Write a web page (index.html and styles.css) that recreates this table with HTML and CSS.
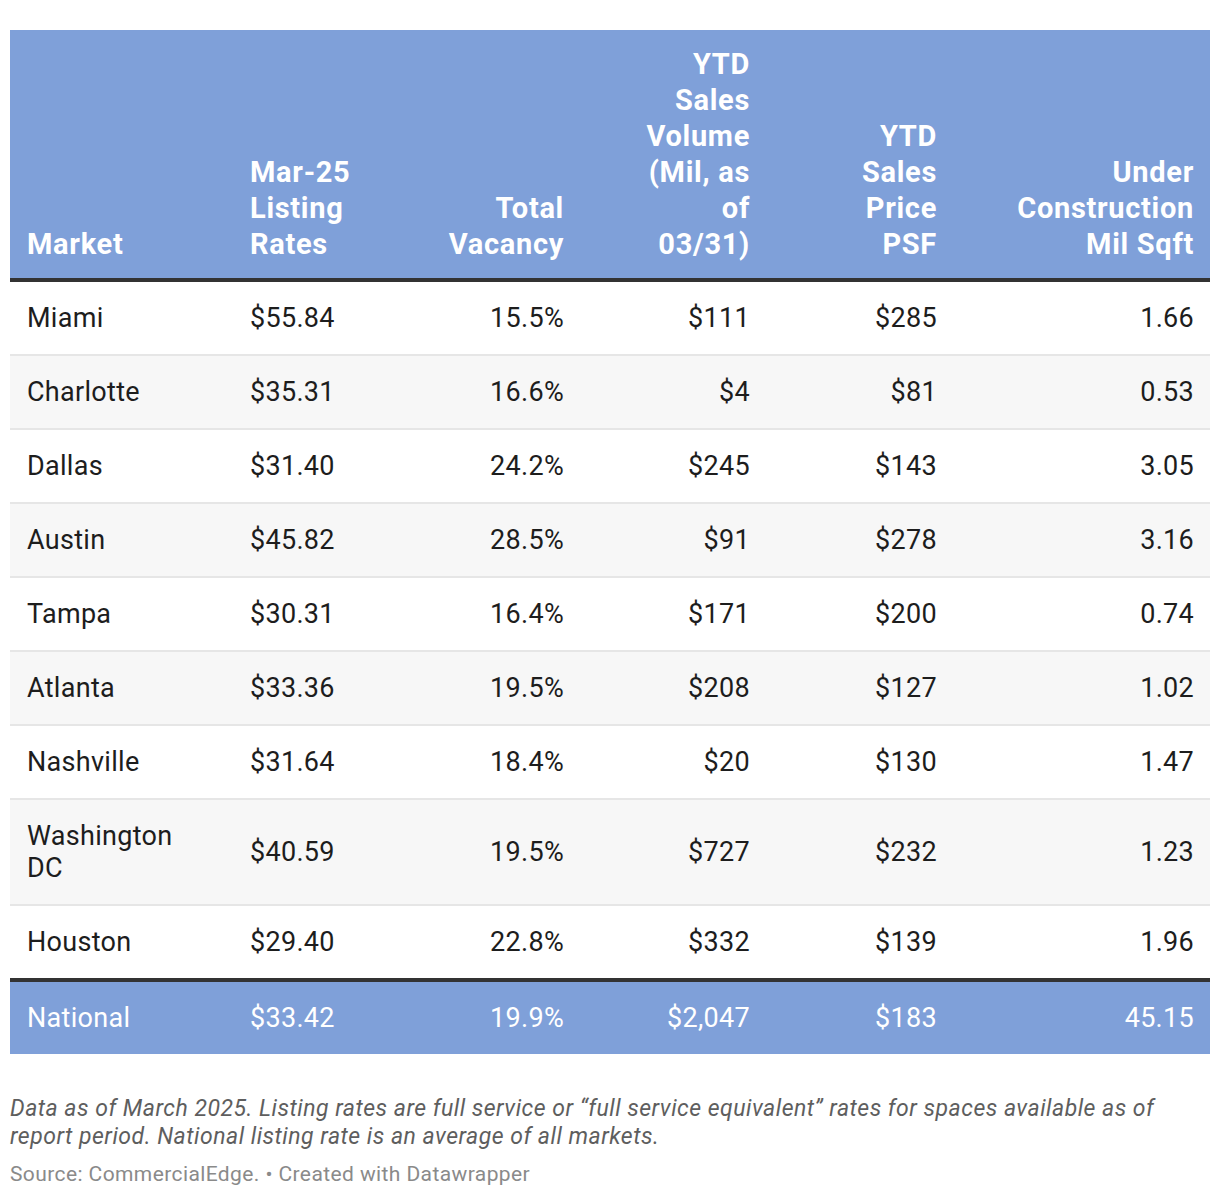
FILE: index.html
```html
<!DOCTYPE html>
<html lang="en">
<head>
<meta charset="utf-8">
<title>Office Market Table</title>
<link rel="stylesheet" href="styles.css">
</head>
<body>
<div class="chart">
  <table class="data">
    <colgroup>
      <col class="c-market">
      <col class="c-rate">
      <col class="c-vac">
      <col class="c-vol">
      <col class="c-price">
      <col class="c-uc">
    </colgroup>
    <thead>
      <tr>
        <th class="left">Market</th>
        <th class="left">Mar-25 Listing Rates</th>
        <th>Total Vacancy</th>
        <th>YTD Sales Volume (Mil, as of 03/31)</th>
        <th>YTD Sales Price PSF</th>
        <th>Under Construction Mil Sqft</th>
      </tr>
    </thead>
    <tbody>
      <tr><td class="left">Miami</td><td class="left">$55.84</td><td>15.5%</td><td>$111</td><td>$285</td><td>1.66</td></tr>
      <tr><td class="left">Charlotte</td><td class="left">$35.31</td><td>16.6%</td><td>$4</td><td>$81</td><td>0.53</td></tr>
      <tr><td class="left">Dallas</td><td class="left">$31.40</td><td>24.2%</td><td>$245</td><td>$143</td><td>3.05</td></tr>
      <tr><td class="left">Austin</td><td class="left">$45.82</td><td>28.5%</td><td>$91</td><td>$278</td><td>3.16</td></tr>
      <tr><td class="left">Tampa</td><td class="left">$30.31</td><td>16.4%</td><td>$171</td><td>$200</td><td>0.74</td></tr>
      <tr><td class="left">Atlanta</td><td class="left">$33.36</td><td>19.5%</td><td>$208</td><td>$127</td><td>1.02</td></tr>
      <tr><td class="left">Nashville</td><td class="left">$31.64</td><td>18.4%</td><td>$20</td><td>$130</td><td>1.47</td></tr>
      <tr><td class="left">Washington DC</td><td class="left">$40.59</td><td>19.5%</td><td>$727</td><td>$232</td><td>1.23</td></tr>
      <tr><td class="left">Houston</td><td class="left">$29.40</td><td>22.8%</td><td>$332</td><td>$139</td><td>1.96</td></tr>
    </tbody>
    <tfoot>
      <tr><td class="left">National</td><td class="left">$33.42</td><td>19.9%</td><td>$2,047</td><td>$183</td><td>45.15</td></tr>
    </tfoot>
  </table>
  <p class="notes">Data as of March 2025. Listing rates are full service or “full service equivalent” rates for spaces available as of report period. National listing rate is an average of all markets.</p>
  <p class="source">Source: CommercialEdge. • Created with Datawrapper</p>
</div>
</body>
</html>
```

FILE: styles.css
```css
html, body {
  margin: 0;
  padding: 0;
  background: #ffffff;
}

body {
  font-family: Roboto, "Liberation Sans", sans-serif;
  color: #1d1d1d;
}

.chart {
  width: 1200px;
  padding: 30px 10px 0 10px;
}

.data {
  width: 1200px;
  border-collapse: collapse;
  table-layout: fixed;
}

.c-market { width: 210px; }
.c-rate { width: 190px; }
.c-vac { width: 170px; }
.c-vol { width: 186px; }
.c-price { width: 187px; }
.c-uc { width: 257px; }

.data th,
.data td {
  text-align: right;
  padding-right: 16px;
}

.data .left {
  text-align: left;
}

.data th:nth-child(1), .data td:nth-child(1) { padding-left: 17px; padding-right: 17px; }
.data th:nth-child(2), .data td:nth-child(2) { padding-left: 30px; }
.data th:nth-child(3), .data td:nth-child(3) { padding-left: 16px; }
.data th:nth-child(4), .data td:nth-child(4) { padding-left: 52px; }
.data th:nth-child(5), .data td:nth-child(5) { padding-left: 61px; }
.data th:nth-child(6), .data td:nth-child(6) { padding-left: 41px; }

.data thead th {
  background: #7fa0d9;
  color: #ffffff;
  font-weight: 700;
  font-size: 29px;
  letter-spacing: 0.7px;
  line-height: 36px;
  vertical-align: bottom;
  padding-top: 16px;
  padding-bottom: 16px;
  border-bottom: 4px solid #333333;
}

.data tbody td,
.data tfoot td {
  font-size: 27px;
  letter-spacing: 0.3px;
  line-height: 32px;
  padding-top: 20px;
  padding-bottom: 20px;
  vertical-align: middle;
}

.data tbody td {
  border-bottom: 2px solid #e6e6e6;
}

.data tbody tr:nth-child(even) td {
  background: #f7f7f7;
}

.data tbody tr:last-child td {
  border-bottom: none;
}

.data tfoot td {
  background: #7fa0d9;
  color: #ffffff;
  border-top: 4px solid #333333;
}

.notes {
  margin: 41px 0 0 0;
  font-size: 23px;
  letter-spacing: 0.5px;
  line-height: 28px;
  font-style: italic;
  color: #5e5e5e;
}

.source {
  margin: 10px 0 0 0;
  font-size: 21px;
  letter-spacing: 0.4px;
  line-height: 26px;
  color: #8a8a8a;
}
```
